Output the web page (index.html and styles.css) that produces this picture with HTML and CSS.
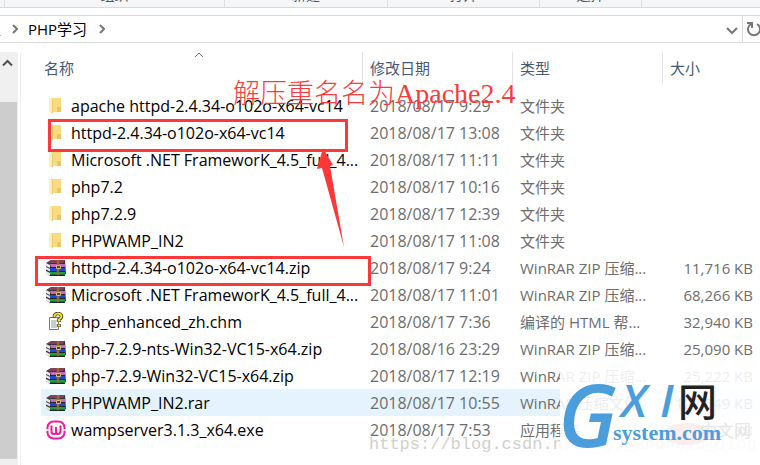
FILE: index.html
```html
<!DOCTYPE html>
<html lang="zh-CN">
<head>
<meta charset="utf-8">
<title>PHP学习</title>
<link rel="stylesheet" href="styles.css">
</head>
<body>
<svg class="defs" aria-hidden="true">
  <symbol id="folder" viewBox="0 0 20 20">
    <path d="M5 2h10v14H5z" fill="#f9dc82"/>
    <path d="M11 11h4v5h-4z" fill="#ecc565"/>
    <path d="M3 2l3 2v14l-3-2z" fill="#ffeeb8"/>
    <path d="M6.500 4v13" stroke="#eccb74" stroke-width="1"/>
  </symbol>
  <symbol id="rar" viewBox="0 0 20 20">
    <path d="M0 5l5-3h14l1 14-3 2H4l-4-3z" fill="#3b3440"/>
    <path d="M0 5l4 2v3l-4-2zM0 9l4 2v2.500l-4-2zM0 13l4 2v2.500l-4-2z" fill="#e9e9e9"/>
    <path d="M5 2h14l-2 3H2z" fill="#83405b"/>
    <path d="M4 6h15v3H5z" fill="#c76bb8"/>
    <path d="M4 10h15v3H4z" fill="#1d49d8"/>
    <path d="M4 14h15v2.500H4z" fill="#15a33a"/>
    <path d="M4 9.500h15M4 13.500h15M4 17.500h15" stroke="#222"/>
    <path d="M12 2v15" stroke="#9a6a35" stroke-width="2.500"/>
    <path d="M10.500 7.500h4v3h-4z" fill="#5c4428" stroke="#d8b878"/>
  </symbol>
  <symbol id="chm" viewBox="0 0 20 20">
    <path d="M3.500 5.500h9v12h-9z" fill="#fff" stroke="#777"/>
    <path d="M5 9h6M5 11h5M5 13h6M5 15h6" stroke="#999"/>
    <path d="M8.500 5.500V3.500q1-2 3.500-2t3.500 2.500q0 2-2.500 3.500v2.500M13 12v3" fill="none" stroke="#333" stroke-width="3.500"/>
    <path d="M8.500 5V3.500q1-2 3.500-2t3.500 2.500q0 2-2.500 3.500v2M13 12.500v2" fill="none" stroke="#ffe800" stroke-width="2"/>
  </symbol>
  <symbol id="wamp" viewBox="0 0 20 20">
    <rect x="1.500" y="1.500" width="17" height="17" rx="6" fill="none" stroke="#f0189a" stroke-width="2"/>
    <path d="M0 10h4M16 10h4" stroke="#fff" stroke-width="1.500"/>
    <path d="M5.500 5.500v6q0 2.500 2.500 2.500t2-2.500V7v4.500q0 2.500 2 2.500t2.500-2.500v-6" fill="none" stroke="#f0189a" stroke-width="2"/>
  </symbol>
</svg>

<div class="ribbon"><span></span><span>组织</span><span>新建</span><span>打开</span><span>选择</span><span></span></div>

<nav class="address" aria-label="地址">
  <span class="cut">主</span>
  <svg class="chev" viewBox="0 0 6 10"><path d="M1 1l4 4-4 4"/></svg>
  <a href="#">PHP学习</a>
  <svg class="chev" viewBox="0 0 6 10"><path d="M1 1l4 4-4 4"/></svg>
  <button class="drop" aria-label="展开"><svg width="12" height="8" viewBox="0 0 12 8"><path d="M1 1l5 5 5-5"/></svg></button>
  <button class="refresh" aria-label="刷新"><svg width="16" height="16" viewBox="0 0 16 16"><path d="M5 3a6 6 0 1 0 6 0M1 2h5v5"/></svg></button>
</nav>

<main class="view">
  <div class="scroll"><svg viewBox="0 0 15 10"><path d="M3 7.500l4.500-4.500 4.500 4.500"/></svg><div class="thumb"></div></div>
  <div class="pane">
    <table>
      <thead><tr>
        <th class="name"><span>名称<svg class="sort" viewBox="0 0 10 6"><path d="M1 5l4-4 4 4"/></svg></span></th>
        <th class="date"><span>修改日期</span></th>
        <th class="type"><span>类型</span></th>
        <th class="size"><span>大小</span></th>
      </tr></thead>
      <tbody>
        <tr><td><svg><use href="#folder"/></svg>apache httpd-2.4.34-o102o-x64-vc14</td><td>2018/08/17 9:29</td><td>文件夹</td><td></td></tr>
        <tr><td><svg><use href="#folder"/></svg>httpd-2.4.34-o102o-x64-vc14</td><td>2018/08/17 13:08</td><td>文件夹</td><td></td></tr>
        <tr><td><svg><use href="#folder"/></svg>Microsoft .NET FrameworK_4.5_full_4...</td><td>2018/08/17 11:11</td><td>文件夹</td><td></td></tr>
        <tr><td><svg><use href="#folder"/></svg>php7.2</td><td>2018/08/17 10:16</td><td>文件夹</td><td></td></tr>
        <tr><td><svg><use href="#folder"/></svg>php7.2.9</td><td>2018/08/17 12:39</td><td>文件夹</td><td></td></tr>
        <tr><td><svg><use href="#folder"/></svg>PHPWAMP_IN2</td><td>2018/08/17 11:08</td><td>文件夹</td><td></td></tr>
        <tr><td><svg><use href="#rar"/></svg>httpd-2.4.34-o102o-x64-vc14.zip</td><td>2018/08/17 9:24</td><td>WinRAR ZIP 压缩...</td><td>11,716 KB</td></tr>
        <tr><td><svg><use href="#rar"/></svg>Microsoft .NET FrameworK_4.5_full_4...</td><td>2018/08/17 11:01</td><td>WinRAR ZIP 压缩...</td><td>68,266 KB</td></tr>
        <tr><td><svg><use href="#chm"/></svg>php_enhanced_zh.chm</td><td>2018/08/17 7:36</td><td>编译的 HTML 帮...</td><td>32,940 KB</td></tr>
        <tr><td><svg><use href="#rar"/></svg>php-7.2.9-nts-Win32-VC15-x64.zip</td><td>2018/08/16 23:29</td><td>WinRAR ZIP 压缩...</td><td>25,090 KB</td></tr>
        <tr><td><svg><use href="#rar"/></svg>php-7.2.9-Win32-VC15-x64.zip</td><td>2018/08/17 12:19</td><td>WinRAR ZIP 压缩...</td><td>25,222 KB</td></tr>
        <tr class="hover"><td><svg><use href="#rar"/></svg>PHPWAMP_IN2.rar</td><td>2018/08/17 10:55</td><td>WinRAR 压缩文件</td><td>127,549 KB</td></tr>
        <tr><td><svg><use href="#wamp"/></svg>wampserver3.1.3_x64.exe</td><td>2018/08/17 7:53</td><td>应用程序</td><td>314,081 KB</td></tr>
      </tbody>
    </table>
  </div>
</main>

<div class="url">https://blog.csdn.net/xjy_android_blog</div>
<svg class="marks" width="760" height="465" viewBox="0 0 760 465">
  <rect x="49.500" y="120.500" width="297" height="30"/>
  <rect x="36.500" y="257.500" width="333" height="27"/>
  <path d="M323 148l10 17-3 1 14 81-22-79-5 1z"/>
</svg>
<div class="note">解压重名名为<span>Apache2.4</span></div>
<div class="logo">
  <svg width="200" height="102" viewBox="0 0 200 102">
    <ellipse class="blush" cx="127" cy="71" rx="24" ry="11"/>
    <text class="ghost" x="140" y="74">中文网</text>
    <text class="g" x="-2" y="84">G</text>
    <text class="xi" x="61" y="54">X</text>
    <text class="xi" x="100" y="54">I</text>
    <text class="net" x="118" y="53">网</text>
    <text class="sys" x="53" y="77">system.com</text>
  </svg>
</div>
</body>
</html>
```
FILE: styles.css
```css
* { box-sizing: border-box; }
body {
  margin: 0;
  min-height: 100vh;
  display: flex;
  flex-direction: column;
  position: relative;
  overflow: hidden;
  background: #fff;
  color: #000;
  font: 15px/27px "Open Sans", "Noto Sans CJK SC", sans-serif;
}
.defs { position: absolute; width: 0; height: 0; }
.ribbon {
  display: grid;
  grid-template-columns: 5px 220px 163px 152px 102px 1fr;
  align-content: end;
  height: 8px;
  overflow: hidden;
  background: #f5f6f7;
  border-bottom: 1px solid #d9dadb;
  color: #555;
  font-size: 14px;
  line-height: 16px;
  text-align: center;
}
.ribbon span { height: 20px; padding-bottom: 4px; border-right: 1px solid #dcddde; }
.ribbon span:last-child { border: 0; }
.address {
  display: flex;
  align-items: center;
  height: 28px;
  margin-top: 7px;
  border: solid #d9d9d9;
  border-width: 1px 0;
}
.address a { color: #000; text-decoration: none; margin: 0 12px 0 10px; line-height: 26px; }
.cut { width: 1px; overflow: hidden; display: flex; justify-content: flex-end; margin-right: 11px; }
.chev { width: 6px; height: 10px; fill: none; stroke: #777; stroke-width: 2; }
button { border: 0; padding: 0; background: none; display: flex; align-items: center; justify-content: center; height: 26px; }
button svg { fill: none; stroke: #777; stroke-width: 2; flex: none; }
.drop { margin-left: auto; width: 20px; padding-top: 3px; }
.refresh { width: 18px; border-left: 1px solid #d9d9d9; padding-left: 4px; }
.view { flex: 1; display: flex; margin-top: 9px; }
.scroll { width: 18px; background: #f0f0f0; display: flex; flex-direction: column; padding-bottom: 6px; }
.scroll svg { width: 15px; height: 10px; margin: 6px 0 34px; fill: none; stroke: #505050; stroke-width: 2; }
.thumb { flex: 1; width: 17px; background: #cdcdcd; }
.pane { flex: 1; margin-left: 2px; padding-left: 20px; border-left: 1px solid #f0f0f0; }
table { width: 100%; border-collapse: collapse; table-layout: fixed; }
th, td { padding: 0; height: 27px; text-align: left; white-space: nowrap; font-weight: 400; }
th { height: 40px; vertical-align: top; color: #44597a; }
th span { display: block; height: 32px; line-height: 32px; padding-left: 7px; border-right: 1px solid #e2e2e2; position: relative; }
.size span { border: 0; }
.name { width: 322px; }
.name span { padding-left: 3px; }
.date, .type { width: 150px; }
.sort { position: absolute; left: 153px; top: 0; width: 10px; height: 6px; fill: none; stroke: #666; }
td { color: #6d6d6d; padding-left: 7px; line-height: 26px; }
td:first-child { color: #000; padding-left: 5px; font-size: 16px; }
td:nth-child(2) { font-size: 16px; }
td:last-child { text-align: right; padding: 0 7px 0 0; }
td svg { width: 20px; height: 20px; margin-right: 5px; vertical-align: -4px; }
.hover { background: #e5f3ff; }
.marks { position: absolute; left: 0; top: 0; }
.marks rect { fill: none; stroke: #fd3838; stroke-width: 3; }
.marks path { fill: #fd3838; }
.note {
  position: absolute; left: 233px; top: 77px;
  color: #fb3b3b; white-space: nowrap;
  font: 300 27px/34px "Liberation Serif", "Noto Sans CJK SC", serif;
}
.note span { font-size: 28px; }
.url { position: absolute; left: 369px; top: 434px; color: #d0d0cc; font: 17px/22px "Liberation Mono", monospace; }
.logo { position: absolute; left: 560px; top: 363px; height: 102px; background: rgba(255,255,255,.88); }
.logo text { fill: #4b9edb; }
.logo .g { font: italic 600 86px "Open Sans", sans-serif; }
.logo .xi { font: italic 600 46px "Open Sans", sans-serif; }
.logo .net { font: 500 39px "Noto Sans CJK SC", sans-serif; fill: #222; }
.logo .sys { font: 700 22px "Liberation Serif", serif; }
.logo .ghost { font: 17px "Noto Sans CJK SC", sans-serif; fill: #e6e6e6; }
.blush { fill: #fdeeee; }
```
